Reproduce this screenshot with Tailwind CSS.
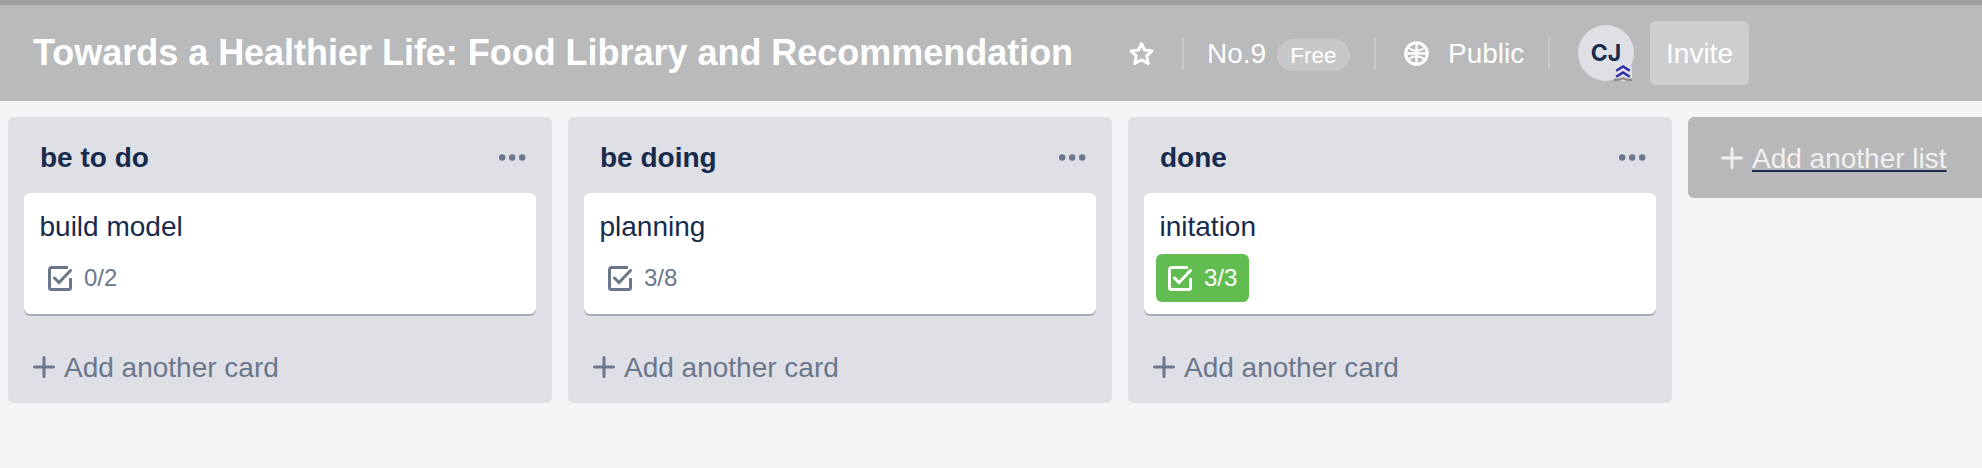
<!DOCTYPE html>
<html lang="en"><head><meta charset="utf-8"><title>Board</title>
<script src="https://cdn.jsdelivr.net/npm/@tailwindcss/browser@4"></script></head>
<body class="w-[1982px] h-[468px] overflow-hidden bg-[#f4f5f7] text-[28px] leading-[40px] text-[#172b4d] font-['Liberation_Sans',Arial,sans-serif]">
<svg class="hidden">
<symbol id="check" viewBox="0 0 24 25"><path d="M20 1.500H3.500a2 2 0 0 0-2 2V21.500a2 2 0 0 0 2 2H20.500a2 2 0 0 0 2-2V12" fill="none" stroke="currentColor" stroke-width="3"/><path d="M6.500 12l4.500 4.500L22.500 4.500" fill="none" stroke="currentColor" stroke-width="3" stroke-linecap="round"/></symbol>
<symbol id="dots" viewBox="0 0 27 7"><circle cx="3.200" cy="3.500" r="3.200"/><circle cx="13.200" cy="3.500" r="3.200"/><circle cx="23.200" cy="3.500" r="3.200"/></symbol>
<symbol id="plus" viewBox="0 0 22 22"><path d="M11 1.500v19M1.500 11h19" stroke="currentColor" stroke-width="3" stroke-linecap="round"/></symbol>
</svg>
<header class="flex items-start h-[101px] border-t-[5px] border-[#9e9ea0] bg-[#b8babc] text-white">
<h1 class="ml-[33px] mt-[28px] w-[1040px] text-[36px] leading-[40px] tracking-[-0.025px] font-bold whitespace-nowrap">Towards a Healthier Life: Food Library and Recommendation</h1>
<svg class="ml-[56px] mt-[36px] w-[25px] h-[25px] shrink-0" viewBox="0 0 25 25"><path d="M12.500 2.500l3 6.500 7.500 .9-5.300 4.900 1.500 7.700-6.700-3.600-6.700 3.600 1.500-7.700L2 9.900l7.500-.9z" fill="none" stroke="currentColor" stroke-width="3" stroke-linejoin="round"/></svg>
<div class="ml-[28px] mt-[32px] w-[2px] h-[32px] bg-[#c6c8ca]"></div>
<span class="ml-[23px] mt-[29px] w-[70px]">No.9</span>
<span class="mt-[34px] w-[73px] h-[32px] rounded-full bg-[#c6c8ca] text-center text-[22.500px] leading-[33px]">Free</span>
<div class="ml-[24px] mt-[32px] w-[2px] h-[32px] bg-[#c6c8ca]"></div>
<svg class="ml-[28px] mt-[36px] w-[25px] h-[25px]" viewBox="0 0 25 25" fill="none" stroke="currentColor"><circle cx="12.500" cy="12.500" r="10.800" stroke-width="3"/><path d="M12.500 2v21M2 12.500h21" stroke-width="2.300"/><path d="M4 6.500q8.500 6.500 17 0M4 18.500q8.500-6.500 17 0" stroke-width="1.900"/></svg>
<span class="ml-[19px] mt-[29px] w-[100px]">Public</span>
<div class="mt-[32px] w-[2px] h-[32px] bg-[#c6c8ca]"></div>
<div class="relative ml-[28px] mt-[20px] w-[56px] h-[56px] rounded-full bg-[#dfe0e6] text-center font-[Inter] text-[23px] leading-[57px] font-bold text-[#172b4d]">CJ
<svg class="absolute left-[36px] top-[38px] w-[18px] h-[18px]" viewBox="0 0 18 18"><path d="M0 4L9 0l9 4v14H0z" fill="#dfe0e6"/><path d="M0 15.500h5l4-1.500 4 1.500h5V18h-5l-4-1.500L5 18H0z" fill="#8c8c90"/><path d="M2.200 7.800L9 3.400l6.800 4.400M2.200 13.800L9 9.400l6.800 4.400" fill="none" stroke="#2c2ca8" stroke-width="2.400"/></svg></div>
<div class="ml-[16px] mt-[16px] w-[99px] h-[64px] rounded-[6px] bg-[#cdced0] text-center leading-[65px]">Invite</div>
</header>
<main class="flex items-start gap-[16px] pl-[8px] pt-[16px] overflow-hidden">
<section class="w-[544px] h-[286px] shrink-0 rounded-[6px] bg-[#dfe0e6] px-[16px]">
<div class="flex items-center justify-between h-[76px] pl-[16px] pr-[10px] pt-[4px]"><h2 class="font-bold pt-[2px]">be to do</h2><svg class="w-[27px] h-[7px] fill-[#6b778c]"><use href="#dots"/></svg></div>
<article class="h-[121px] rounded-[6px] bg-white shadow-[0_2px_0_#a5adba] pt-[14px] pl-[12px]"><p class="pl-[3.500px]">build model</p>
<div class="mt-[7px] w-[93px] h-[48px] rounded-[6px] pl-[12px] flex items-center gap-[12px] text-[24px] leading-[40px] text-[#6b778c]"><svg class="w-[24px] h-[25px]"><use href="#check"/></svg>0/2</div></article>
<div class="mt-[32px] pl-[9px] flex items-center gap-[9px] text-[#6b778c]"><svg class="w-[22px] h-[22px]"><use href="#plus"/></svg><span class="pt-[2px]">Add another card</span></div>
</section>
<section class="w-[544px] h-[286px] shrink-0 rounded-[6px] bg-[#dfe0e6] px-[16px]">
<div class="flex items-center justify-between h-[76px] pl-[16px] pr-[10px] pt-[4px]"><h2 class="font-bold pt-[2px]">be doing</h2><svg class="w-[27px] h-[7px] fill-[#6b778c]"><use href="#dots"/></svg></div>
<article class="h-[121px] rounded-[6px] bg-white shadow-[0_2px_0_#a5adba] pt-[14px] pl-[12px]"><p class="pl-[3.500px]">planning</p>
<div class="mt-[7px] w-[93px] h-[48px] rounded-[6px] pl-[12px] flex items-center gap-[12px] text-[24px] leading-[40px] text-[#6b778c]"><svg class="w-[24px] h-[25px]"><use href="#check"/></svg>3/8</div></article>
<div class="mt-[32px] pl-[9px] flex items-center gap-[9px] text-[#6b778c]"><svg class="w-[22px] h-[22px]"><use href="#plus"/></svg><span class="pt-[2px]">Add another card</span></div>
</section>
<section class="w-[544px] h-[286px] shrink-0 rounded-[6px] bg-[#dfe0e6] px-[16px]">
<div class="flex items-center justify-between h-[76px] pl-[16px] pr-[10px] pt-[4px]"><h2 class="font-bold pt-[2px]">done</h2><svg class="w-[27px] h-[7px] fill-[#6b778c]"><use href="#dots"/></svg></div>
<article class="h-[121px] rounded-[6px] bg-white shadow-[0_2px_0_#a5adba] pt-[14px] pl-[12px]"><p class="pl-[3.500px]">initation</p>
<div class="mt-[7px] w-[93px] h-[48px] rounded-[6px] pl-[12px] flex items-center gap-[12px] text-[24px] leading-[40px] bg-[#61bd4f] text-white"><svg class="w-[24px] h-[25px]"><use href="#check"/></svg>3/3</div></article>
<div class="mt-[32px] pl-[9px] flex items-center gap-[9px] text-[#6b778c]"><svg class="w-[22px] h-[22px]"><use href="#plus"/></svg><span class="pt-[2px]">Add another card</span></div>
</section>
<div class="w-[294px] h-[81px] shrink-0 rounded-l-[6px] bg-[#b8b8ba] pl-[33px] flex items-center gap-[9px] text-[#f0f0f0]"><svg class="w-[22px] h-[22px]"><use href="#plus"/></svg><span class="pt-[2px] underline decoration-[#172b4d] decoration-2 underline-offset-[2px] [text-decoration-skip-ink:none]">Add another list</span></div>
</main>
</body></html>
